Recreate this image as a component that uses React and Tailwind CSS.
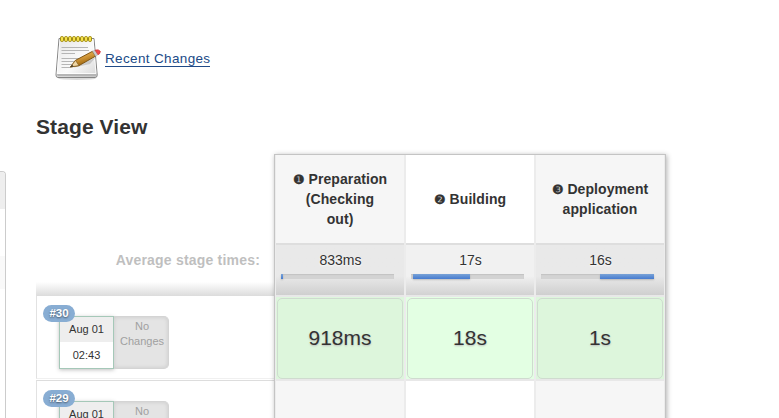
import React from 'react';

const stages = [
  { mark: '❶', name: ['Preparation', '(Checking', 'out)'], average: '833ms', duration: '918ms', start: 0, width: 2, odd: true },
  { mark: '❷', name: ['Building'], average: '17s', duration: '18s', start: 2, width: 57, odd: false },
  { mark: '❸', name: ['Deployment', 'application'], average: '16s', duration: '1s', start: 59, width: 54, odd: true },
];

const rings = [0, 1, 2, 3, 4, 5, 6, 7];

function NotepadIcon() {
  return (
    <svg width="48" height="48" viewBox="0 0 48 48" className="shrink-0">
      <defs>
        <linearGradient id="paper" x1="0" y1="0" x2="1" y2="1">
          <stop offset="0" stopColor="#e6e6e6" />
          <stop offset="0.55" stopColor="#fafafa" />
          <stop offset="1" stopColor="#d6d6d6" />
        </linearGradient>
        <linearGradient id="wood" x1="0" y1="0" x2="0.5" y2="1">
          <stop offset="0" stopColor="#e9b96e" />
          <stop offset="0.5" stopColor="#d49a3c" />
          <stop offset="1" stopColor="#8f5902" />
        </linearGradient>
      </defs>
      <ellipse cx="24" cy="44.500" rx="19" ry="1.500" fill="#000" opacity="0.15" />
      <path d="M6 4.500 H41 L44.200 41 Q44.200 43.500 42.200 43.500 H5 Q3 43.500 3 41 Z" fill="url(#paper)" stroke="#858585" />
      <path d="M4 40 H43.200 L43 42.500 H4.500 Z" fill="#b5b5b5" />
      <path d="M7 5.500 H40 L43 39.500 H4.200 Z" fill="none" stroke="#fff" strokeOpacity="0.8" />
      <path d="M8.500 13.500H35M8.500 16.500H36M8.500 19.500H22M8.500 24.500H36M8.500 27.500H30M8.500 30.500H25M8.500 33.500H18" fill="none" stroke="#b5b5b5" />
      {rings.map((i) => (
        <rect key={i} x={7.5 + i * 4} y="2.500" width="3" height="5" rx="1.300" fill="#f7e34b" stroke="#a08c14" strokeWidth="1" />
      ))}
      <path d="M19 34 L37 30 L43 23 L39 25 Z" fill="#000" opacity="0.15" />
      <path d="M17.500 33 L22.500 26.300 L39.500 17.300 L42.500 22.200 L26 31.600 Z" fill="url(#wood)" stroke="#754c0b" strokeWidth="0.9" />
      <path d="M17.500 33 L22.500 26.300 L26 31.600 Z" fill="#efd6a5" stroke="#805712" strokeWidth="0.7" />
      <path d="M17.500 33 L19.200 30.900 L20.600 32.300 Z" fill="#222" />
      <path d="M39.500 17.300 L42 16.100 L45 20.800 L42.500 22.200 Z" fill="#c9c9c9" stroke="#999" strokeWidth="0.4" />
      <path d="M42 16.100 Q46 14.800 47.200 17.200 Q47.800 19.500 45 20.800 Z" fill="#f04848" stroke="#c02626" strokeWidth="0.5" />
    </svg>
  );
}

function Build({ number }) {
  return (
    <div className="flex h-[85px] flex-col">
      <div className="h-[84px] shrink-0 border-b border-l border-t border-b-[#f0f0f0] border-l-[#e2e2e2] border-t-[#ddd] pl-[6px] pt-[9px]">
        <div className="relative pl-4 pt-3">
          <span className="absolute left-0 top-0 z-10 h-[17px] w-8 rounded-full bg-[#88add3] text-center text-[11.5px] font-bold leading-[17px] text-white [text-shadow:0_1px_2px_#456]">
            {number}
          </span>
          <div className="-mt-px flex w-[110px]">
            <div className="h-[53px] w-[55px] border border-[#a5c8b8] bg-white text-center text-[11px] shadow-[0_1px_4px_rgba(0,0,0,0.25)]">
              <div className="h-[25px] bg-[#eee] leading-[25px]">Aug 01</div>
              <div className="leading-[26px]">02:43</div>
            </div>
            <div className="h-[53px] w-[55px] rounded-r-[5px] border border-l-0 border-[#d4d4d4] bg-[#e4e4e4] pl-[2px] pt-[2px] text-center text-[11px] leading-[15px] text-[#a0a0a0] shadow-[inset_0_0_4px_rgba(0,0,0,0.12)]">
              No<br />Changes
            </div>
          </div>
        </div>
      </div>
    </div>
  );
}

function Stage({ stage }) {
  return (
    <div className={`w-[130px] border-x border-[#ececec] ${stage.odd ? 'bg-[#f6f6f6]' : 'bg-white'}`}>
      <div className="flex h-[88px] flex-col items-center justify-center text-[14px] font-bold leading-5 tracking-[0.08px]">
        {stage.name.map((line, i) => (
          <span key={line} className="h-5 whitespace-nowrap">
            {i === 0 && <span className="text-[13px] font-normal [-webkit-text-stroke:0.3px_#333]">{stage.mark} </span>}
            {line}
          </span>
        ))}
      </div>
      <div className={`h-[52px] border-t-2 border-[#dedede] bg-linear-to-b from-[62%] px-[5px] pt-[5px] ${stage.odd ? 'from-[#e9e9e9] to-[#cfcfcf]' : 'from-[#f1f1f1] to-[#d2d2d2]'}`}>
        <div className="pl-px text-center text-[14px] leading-5 [text-shadow:0_1px_2px_#fff]">{stage.average}</div>
        <div className="mt-[4px] h-[5px] w-[113px] bg-[#d3d3d3] shadow-[inset_0_1px_1px_#c3c3c3]">
          <div className="h-[5px] bg-linear-to-b from-[#79a2d6] to-[#467bd0] shadow-[0_1px_2px_rgba(0,0,0,0.2)]" style={{ marginLeft: stage.start, width: stage.width }} />
        </div>
      </div>
      <div className={`h-[86px] border-y-2 border-[#e8e8e8] px-px pb-[2px] pt-px ${stage.odd ? 'bg-[#ddf6dc]' : 'bg-[#e3ffe3]'}`}>
        <div className="flex h-[81px] items-center justify-center rounded-[5px] border border-[#cfdbcf] pb-[2px] text-[21px] [text-shadow:0_1px_2px_#bbb]">{stage.duration}</div>
      </div>
    </div>
  );
}

export default function App() {
  return (
    <div className="flex h-[418px] w-[779px] overflow-hidden bg-white font-['Liberation_Sans',sans-serif] text-[#333]">
      <aside className="mt-[171px] w-[6px] shrink-0 overflow-hidden rounded-tr-[4px] border-r border-t border-[#ccc]">
        <div className="h-[37px] bg-[#eee]" />
        <div className="mt-[47px] h-[33px] bg-[#f9f9f9]" />
      </aside>
      <main className="ml-[30px] shrink-0">
        <div className="ml-[17px] flex h-[82px] items-end">
          <NotepadIcon />
          <a href="#" className="mb-[15px] ml-1 border-b border-[#204a87] text-[13.5px] leading-[15px] tracking-[0.35px] text-[#204a87]">Recent Changes</a>
        </div>
        <h2 className="mt-[33px] text-[21px] font-bold leading-6 tracking-[0.1px]">Stage View</h2>
        <div className="mt-[15px] flex">
          <section className="w-[238px]">
            <div className="flex h-[141px] flex-col justify-between">
              <div className="pr-[14px] pt-[96px] text-right text-[14px] font-bold leading-5 tracking-[0.2px] text-[#bfbfbf]">Average stage times:</div>
              <div className="h-[13px] bg-linear-to-b from-white to-[#dedede]" />
            </div>
            <Build number="#30" />
            <Build number="#29" />
          </section>
          <section className="flex h-[280px] w-[392px] border border-[#c4c4c4] shadow-[1px_1px_5px_rgba(0,0,0,0.3)]">
            {stages.map((stage) => <Stage key={stage.average} stage={stage} />)}
          </section>
        </div>
      </main>
    </div>
  );
}
